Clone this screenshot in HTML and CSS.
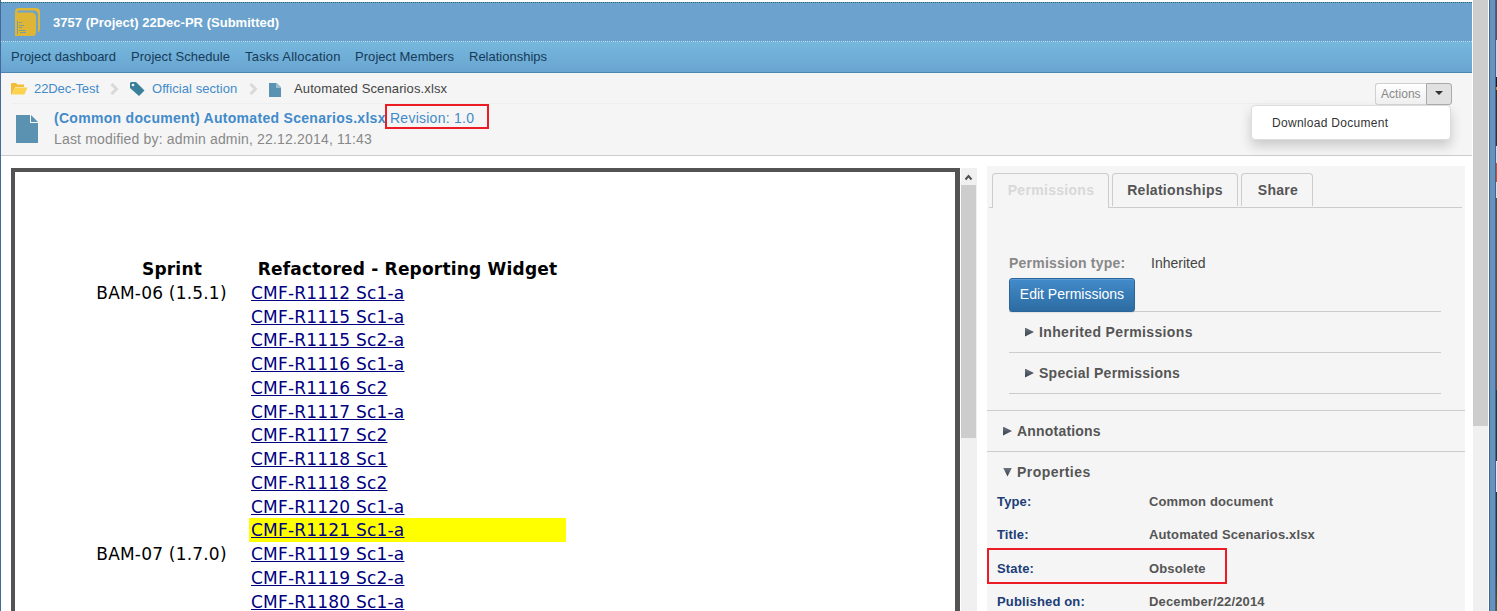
FILE: index.html
```html
<!DOCTYPE html>
<html lang="en">
<head>
<meta charset="utf-8">
<title>Automated Scenarios.xlsx</title>
<link rel="stylesheet" href="styles.css">
</head>
<body>
<div class="window">
  <div class="page">
    <header class="project">
      <svg class="project-icon" width="25" height="28" viewBox="0 0 25 28"><path d="M4 0H21Q25 0 25 4V21Q25 24 23 24.500V6Q22 2.500 19 2.500H4.500Q2 2.500 2 4.500H17Q21 5 21 9V24Q21 28 18 28H0V4Q0 0 4 0Z" fill="#dfb536"/><path d="M2.500 13V26M4 14.500H7M4 17.500H9M4 19.500H7M4 22.500H11M5 24.500H11" fill="none" stroke="#7c9f96" stroke-width="1"/></svg>
      <h1>3757 (Project) 22Dec-PR (Submitted)</h1>
    </header>
    <nav class="menu">
      <a class="m1">Project dashboard</a><a class="m2">Project Schedule</a><a class="m3">Tasks Allocation</a><a class="m4">Project Members</a><a class="m5">Relationships</a>
    </nav>
    <section class="heading">
      <div class="crumbs">
        <svg class="folder" width="17" height="14" viewBox="0 0 17 14"><path d="M0 13V2Q0 1 1 1H5L6.500 2.500H13V5H4.500L1 12Z" fill="#f3bd37"/><path d="M4.500 5.500H16.500L13.500 12.500H1Z" fill="#fbd34e"/></svg>
        <a class="c1">22Dec-Test</a>
        <svg class="chev" width="9" height="12" viewBox="0 0 9 12"><path d="M1.500 1L6.500 6L1.500 11" fill="none" stroke="#d9d9d9" stroke-width="3"/></svg>
        <svg class="tag" width="15" height="14" viewBox="0 0 15 14"><path d="M0 1L1 0H6L14.500 8.500L9 14L0 6Z" fill="#39809b"/><circle cx="3" cy="3" r="1.300" fill="#f5f5f5"/></svg>
        <a class="c2">Official section</a>
        <svg class="chev" width="9" height="12" viewBox="0 0 9 12"><path d="M1.500 1L6.500 6L1.500 11" fill="none" stroke="#d9d9d9" stroke-width="3"/></svg>
        <svg class="file" width="12" height="14" viewBox="0 0 12 14"><path d="M0 0H7V5H12V14H0Z" fill="#5a92b2"/><path d="M7 0H8L12 4V5H7Z" fill="#9dbdce"/></svg>
        <span class="c3">Automated Scenarios.xlsx</span>
      </div>
      <div class="doc">
        <svg class="doc-icon" width="22" height="28" viewBox="0 0 22 28"><path d="M0 0H14V8H22V28H0Z" fill="#5b92b1"/><path d="M15 0L22 7H15Z" fill="#5b92b1"/></svg>
        <div class="doc-text">
          <div class="doc-title"><b>(Common document) Automated Scenarios.xlsx</b><span class="revision">Revision: 1.0</span></div>
          <div class="modified">Last modified by: admin admin, 22.12.2014, 11:43</div>
        </div>
      </div>
      <div class="actions">
        <div class="split"><span class="act">Actions</span><span class="drop"><i class="caret"></i></span></div>
        <div class="dropdown">Download Document</div>
      </div>
    </section>
    <main class="main">
      <div class="viewer">
        <div class="sheet">
          <table>
            <tr><th class="sp">Sprint</th><th class="ref">Refactored - Reporting Widget</th></tr>
            <tr><td class="sp">BAM-06 (1.5.1)</td><td class="ref"><a>CMF-R1112 Sc1-a</a></td></tr>
            <tr><td></td><td class="ref"><a>CMF-R1115 Sc1-a</a></td></tr>
            <tr><td></td><td class="ref"><a>CMF-R1115 Sc2-a</a></td></tr>
            <tr><td></td><td class="ref"><a>CMF-R1116 Sc1-a</a></td></tr>
            <tr><td></td><td class="ref"><a>CMF-R1116 Sc2</a></td></tr>
            <tr><td></td><td class="ref"><a>CMF-R1117 Sc1-a</a></td></tr>
            <tr><td></td><td class="ref"><a>CMF-R1117 Sc2</a></td></tr>
            <tr><td></td><td class="ref"><a>CMF-R1118 Sc1</a></td></tr>
            <tr><td></td><td class="ref"><a>CMF-R1118 Sc2</a></td></tr>
            <tr><td></td><td class="ref"><a>CMF-R1120 Sc1-a</a></td></tr>
            <tr><td></td><td class="ref hit"><a>CMF-R1121 Sc1-a</a></td></tr>
            <tr><td class="sp">BAM-07 (1.7.0)</td><td class="ref"><a>CMF-R1119 Sc1-a</a></td></tr>
            <tr><td></td><td class="ref"><a>CMF-R1119 Sc2-a</a></td></tr>
            <tr><td></td><td class="ref"><a>CMF-R1180 Sc1-a</a></td></tr>
          </table>
        </div>
        <div class="vscroll"><svg class="up" width="16" height="17" viewBox="0 0 16 17"><path d="M4.500 11.500L7.500 8L10.500 11.500" fill="none" stroke="#505050" stroke-width="2"/></svg><div class="vthumb"></div></div>
      </div>
      <aside class="side">
        <div class="tabs"><span class="lead"></span><span class="tab on">Permissions</span><span class="tab t2">Relationships</span><span class="tab t3">Share</span><span class="rest"></span></div>
        <div class="perm">
          <div class="ptype"><b>Permission type:</b><span>Inherited</span></div>
          <div class="edit-row"><span class="edit">Edit Permissions</span></div>
          <div class="fold"><i class="right"></i><b class="f1">Inherited Permissions</b></div>
          <div class="fold"><i class="right"></i><b class="f2">Special Permissions</b></div>
        </div>
        <div class="section"><i class="right"></i><b class="s1">Annotations</b></div>
        <div class="section last"><i class="down"></i><b class="s2">Properties</b></div>
        <dl class="props">
          <div><dt>Type:</dt><dd class="p1">Common document</dd></div>
          <div><dt>Title:</dt><dd class="p2">Automated Scenarios.xlsx</dd></div>
          <div class="marked"><dt>State:</dt><dd class="p3">Obsolete</dd></div>
          <div><dt class="pub">Published on:</dt><dd class="p4">December/22/2014</dd></div>
        </dl>
      </aside>
    </main>
  </div>
  <div class="scroll"><div class="thumb"></div></div>
  <div class="edge"></div>
  <div class="desktop"></div>
</div>
</body>
</html>
```
FILE: styles.css
```css
* { box-sizing: border-box; }
body { margin: 0; height: 611px; overflow: hidden; background: #fff; font: 13px/16px "Liberation Sans", Arial, sans-serif; color: #444; }
svg { display: block; flex: none; }
h1, dl, dt, dd { margin: 0; }
.window { display: flex; height: 611px; }
.page { width: 1472px; height: 611px; border-left: 1px solid #46699a; flex: none; padding-top: 2px; overflow: hidden; }
.project { height: 40px; border-top: 1px dotted #28666c; border-bottom: 1px dotted #c5e4f4; background: #6ba3ce; display: flex; padding: 5px 0 0 14px; }
.project h1 { font-size: 13px; line-height: 16px; color: #fff; margin: 7px 0 0 13px; white-space: nowrap; letter-spacing: .02px; }
.menu { height: 31px; border-bottom: 1px solid #4b86b3; background: linear-gradient(#76b8de, #69a4d0); display: flex; padding: 7px 0 0 10px; color: #163b58; white-space: nowrap; }
.m1 { width: 120px; letter-spacing: -.04px; }
.m2 { width: 114px; letter-spacing: .05px; }
.m3 { width: 110px; letter-spacing: .2px; }
.m4 { width: 114px; letter-spacing: .05px; }
.heading { height: 83px; background: #f5f5f5; border-bottom: 1px solid #ccc; position: relative; }
.crumbs { height: 31px; margin-left: 10px; width: 1309px; border-bottom: 1px solid #efefef; display: flex; align-items: center; white-space: nowrap; }
.crumbs a { color: #428bca; }
.crumbs a, .c3 { padding-top: 2px; }
.folder { margin-top: 2px; }
.c1 { margin-left: 6px; width: 76px; letter-spacing: -.08px; }
.chev { margin: 1px 11px 0 0; }
.tag { margin-top: 1px; }
.c2 { margin-left: 7px; width: 97px; letter-spacing: .06px; }
.file { margin: 3px 13px 0 0; }
.c3 { letter-spacing: .12px; }
.doc { display: flex; padding: 5px 0 0 15px; white-space: nowrap; }
.doc-icon { margin-top: 6px; }
.doc-text { margin-left: 16px; font-size: 14px; }
.doc-title { height: 21px; line-height: 19px; display: flex; color: #428bca; }
.doc-title b { width: 331px; letter-spacing: .3px; }
.revision { border: 2px solid #ed1c24; width: 104px; height: 25px; margin-top: -5px; padding: 2px 0 0 3px; line-height: 20px; letter-spacing: .25px; }
.modified { color: #888; line-height: 19px; height: 19px; letter-spacing: .175px; }
.actions { position: absolute; left: 1250px; top: 10px; width: 201px; }
.split { display: flex; justify-content: flex-end; height: 22px; font-size: 12px; line-height: 20px; color: #888; }
.act { width: 51px; border: 1px solid #d0d0d0; border-right: 0; border-radius: 3px 0 0 3px; background: linear-gradient(#fff, #efefef); padding-left: 5px; letter-spacing: .04px; }
.drop { width: 26px; border: 1px solid #aaa; border-radius: 0 3px 3px 0; background: #e1e1e1; display: flex; justify-content: center; padding-top: 7px; }
.caret { width: 0; height: 0; border: 4px solid transparent; border-top-color: #333; border-bottom: 0; }
.dropdown { width: 200px; height: 35px; border: 1px solid #ddd; border-radius: 4px; background: #fff; box-shadow: 0 6px 12px rgba(0,0,0,.18); padding: 9px 0 0 20px; color: #333; font-size: 12px; letter-spacing: .29px; }
.main { display: flex; height: 455px; padding: 10px 0 0 10px; }
.viewer { display: flex; width: 966px; height: 445px; padding-top: 2px; }
.sheet { width: 949px; border: 4px solid #535353; border-width: 4px 5px 0 4px; padding: 85px 0 0 78px; overflow: hidden; }
table { border-collapse: collapse; font: 17px/21.770px "DejaVu Sans", sans-serif; letter-spacing: .2px; color: #000; white-space: nowrap; }
tr { height: 23.770px; }
td, th { padding: 2px 0 0; line-height: 21.770px; }
.sp { width: 156px; text-align: center; }
th.sp { padding-left: 2px; }
td.sp { padding-right: 19px; }
.ref { width: 317px; }
td.ref { padding-left: 2px; }
.ref a { color: #000080; text-decoration: underline; }
.hit { background: #ff0; }
.vscroll { width: 16px; margin-left: 1px; background: #f0f0f0; }
.vthumb { width: 15px; height: 253px; background: #cdcdcd; }
.side { width: 478px; margin-left: 10px; background: #f5f5f5; }
.tabs { display: flex; padding: 7px 3px 0 2px; height: 42px; font-size: 14px; font-weight: bold; letter-spacing: .3px; }
.lead, .rest { border-bottom: 1px solid #ccc; }
.lead { width: 3px; }
.rest { flex: 1; }
.tab { border-bottom: 1px solid #ccc; padding: 9px 0 0; position: relative; text-align: center; height: 35px; color: #555; }
.tab::before { content: ""; position: absolute; inset: 0 0 1px; border: 1px solid #ccc; border-bottom: 0; border-radius: 4px 4px 0 0; }
.on { width: 117px; border-bottom: 0; color: #d8d8d8; padding-left: 1px; }
.on::before { bottom: 0; }
.t2 { width: 129px; }
.t3 { width: 75px; }
.t2::before, .t3::before { left: 3px; }
.t2 { padding-left: 3px; }
.t3 { padding-left: 5px; }
.perm { height: 203px; border-bottom: 1px solid #ccc; padding: 47px 24px 0 22px; }
.ptype { display: flex; height: 23px; font-size: 14px; }
.ptype b { width: 142px; color: #888; letter-spacing: .22px; }
.edit-row { height: 34px; border-bottom: 1px solid #ccc; }
.edit { display: block; width: 126px; height: 34px; border: 1px solid #2b669a; border-radius: 3px; background: linear-gradient(#428bca, #2d6ca2); box-shadow: inset 0 1px 0 rgba(255,255,255,.15), 0 1px 1px rgba(0,0,0,.08); color: #fff; font-size: 14px; line-height: 31px; text-align: center; }
.fold { height: 41px; border-bottom: 1px solid #ccc; display: flex; align-items: center; padding-left: 16px; font-size: 14px; color: #555; }
.f1 { letter-spacing: .36px; }
.f2 { letter-spacing: .26px; }
.s1 { letter-spacing: .2px; }
.s2 { letter-spacing: .44px; }
.section { height: 41px; border-bottom: 1px solid #ccc; display: flex; align-items: center; padding-left: 16px; font-size: 14px; color: #555; }
.last { border: 0; height: 40px; }
.right, .down { width: 9px; height: 9px; background: linear-gradient(#6b7480, #363e46); clip-path: polygon(0 0, 100% 50%, 0 100%); margin-right: 5px; }
.down { clip-path: polygon(0 0, 100% 0, 50% 100%); }
.props { font-weight: bold; white-space: nowrap; }
.props div { display: flex; height: 33px; padding: 2px 0 0 10px; }
.props dt { width: 152px; color: #203d78; letter-spacing: .15px; }
.props dd { color: #555; letter-spacing: .14px; }
.props .marked { border: 2px solid #ed1c24; width: 240px; height: 36px; padding: 11px 0 0 8px; margin: -10px 0 8px; }
.scroll { width: 15px; margin: 0 1px; background: #f0f0f0; }
.thumb { height: 426px; background: #cdcdcd; }
.edge { width: 7px; background: #6892be; border: 1px solid #3e668c; border-width: 0 1px; }
.desktop { width: 1px; background: linear-gradient(#54565a 0 40px, #d5d5db 40px 77px, #1c1a20 77px 87px, #d28a32 87px 90px, #333 90px 146px, #d7dcdf 146px 163px, #cf502c 163px 182px, #dfdfdf 182px 198px, #55553f 198px 390px, #173e42 390px 461px, #e7e7ed 461px 492px, #123f40 492px 570px, #4c6427 611px); }
```
